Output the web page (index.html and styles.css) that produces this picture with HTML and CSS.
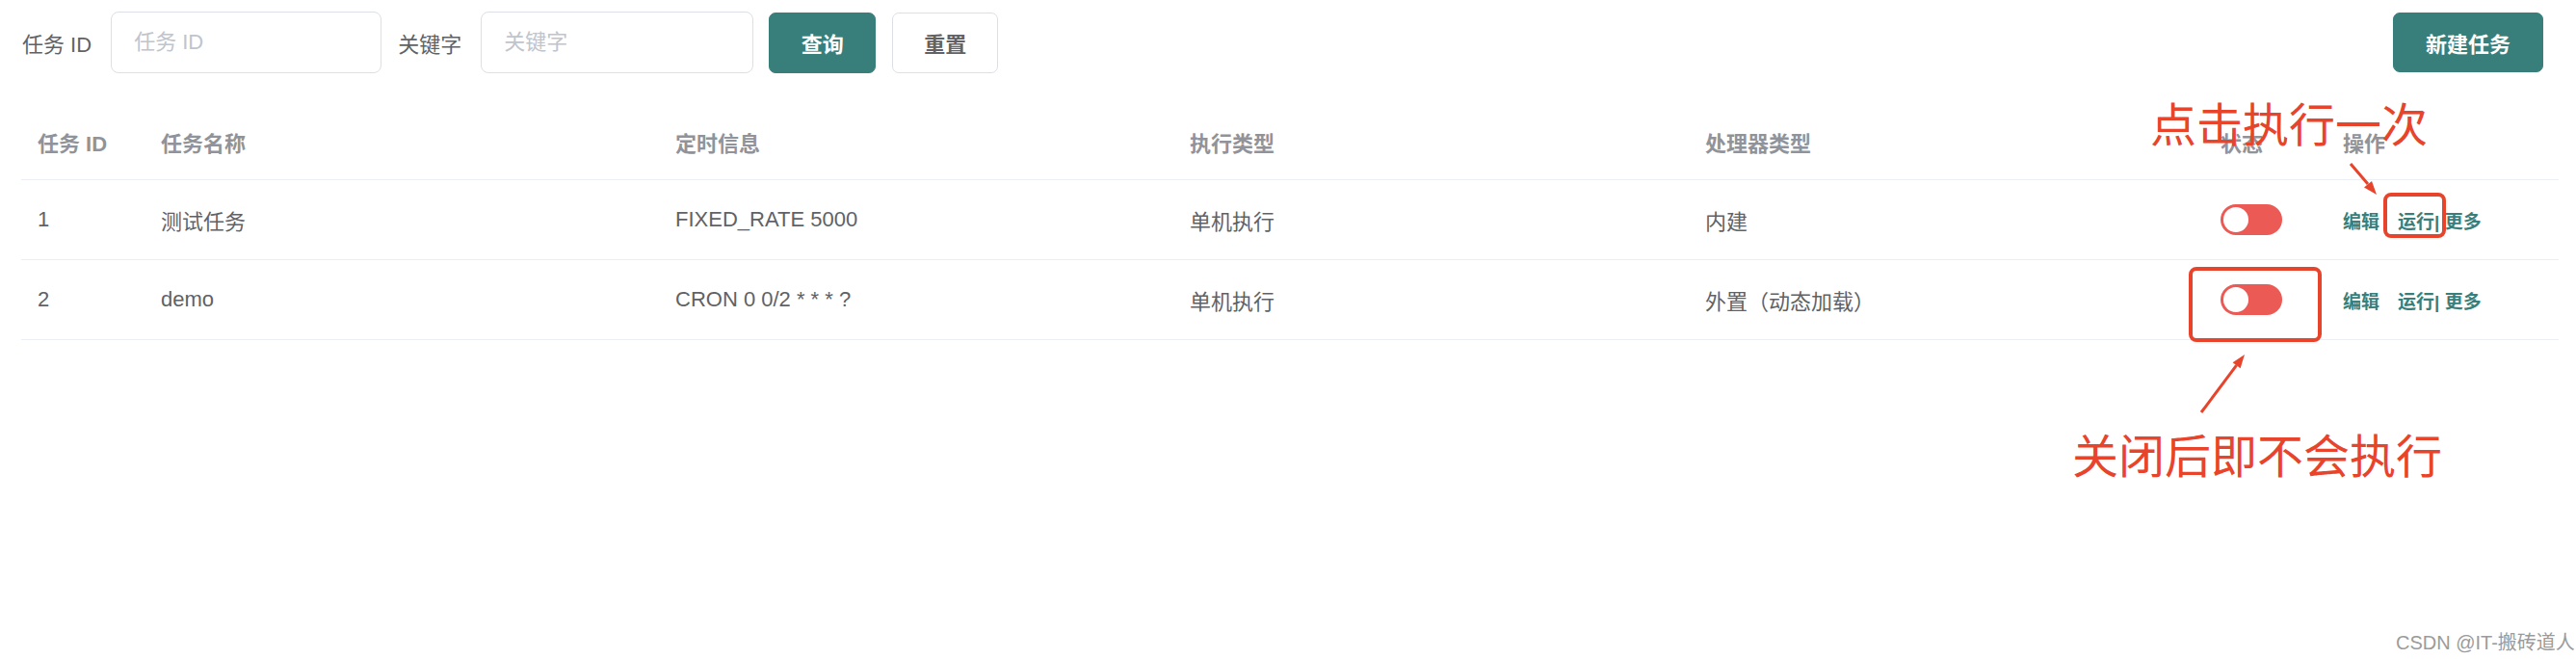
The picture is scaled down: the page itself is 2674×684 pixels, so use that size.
FILE: index.html
```html
<!DOCTYPE html>
<html lang="zh-CN">
<head>
    <meta charset="UTF-8">
    <title>任务管理</title>
    <link rel="stylesheet" href="styles.css">
</head>
<body>
    <div class="page">
        <div class="toolbar">
            <label class="field-label" for="taskId">任务 ID</label>
            <input class="field" type="text" id="taskId" placeholder="任务 ID">
            <label class="field-label" for="keyword">关键字</label>
            <input class="field" type="text" id="keyword" placeholder="关键字">
            <button class="btn btn-primary" type="button">查询</button>
            <button class="btn btn-plain" type="button">重置</button>
            <button class="btn btn-primary btn-new" type="button">新建任务</button>
        </div>

        <table class="task-table">
            <colgroup>
                <col class="c-id">
                <col class="c-name">
                <col class="c-timer">
                <col class="c-exec">
                <col class="c-handler">
                <col class="c-status">
                <col class="c-ops">
            </colgroup>
            <thead>
                <tr>
                    <th>任务 ID</th>
                    <th>任务名称</th>
                    <th>定时信息</th>
                    <th>执行类型</th>
                    <th>处理器类型</th>
                    <th>状态</th>
                    <th>操作</th>
                </tr>
            </thead>
            <tbody>
                <tr>
                    <td>1</td>
                    <td>测试任务</td>
                    <td>FIXED_RATE 5000</td>
                    <td>单机执行</td>
                    <td>内建</td>
                    <td><span class="switch"><span class="knob"></span></span></td>
                    <td class="ops"><a href="#">编辑</a><a href="#" class="run">运行| </a><a href="#">更多</a></td>
                </tr>
                <tr>
                    <td>2</td>
                    <td>demo</td>
                    <td>CRON 0 0/2 * * * ?</td>
                    <td>单机执行</td>
                    <td>外置（动态加载）</td>
                    <td><span class="switch"><span class="knob"></span></span></td>
                    <td class="ops"><a href="#">编辑</a><a href="#" class="run">运行| </a><a href="#">更多</a></td>
                </tr>
            </tbody>
        </table>
    </div>

    <!-- annotations drawn over the screenshot -->
    <div class="note note-run">点击执行一次</div>
    <div class="note note-off">关闭后即不会执行</div>
    <div class="mark mark-run"></div>
    <div class="mark mark-switch"></div>
    <svg class="arrows" width="2674" height="684" viewBox="0 0 2674 684">
        <line x1="2440" y1="170" x2="2458" y2="191" stroke="#e8432b" stroke-width="3"/>
        <polygon points="2467,202 2454,194.5 2462,188" fill="#e8432b"/>
        <line x1="2285" y1="428" x2="2321.6" y2="379.2" stroke="#e8432b" stroke-width="3"/>
        <polygon points="2330,368 2325.6,382.2 2317.6,376.2" fill="#e8432b"/>
    </svg>
    <div class="watermark">CSDN @IT-搬砖道人</div>
</body>
</html>
```

FILE: styles.css
```css
body {
    margin: 0;
    background: #fff;
    font-family: "Liberation Sans", "Noto Sans CJK SC", sans-serif;
    font-size: 22px;
    color: #606266;
    width: 2674px;
    height: 684px;
    position: relative;
    overflow: hidden;
}
.page {
    padding: 12px 18px 0 22px;
}
.toolbar {
    display: flex;
    align-items: center;
    height: 64px;
    padding-right: 16px;
}
.field-label {
    margin: 0 20px 0 1px;
    color: #606266;
    white-space: nowrap;
}
.field {
    box-sizing: border-box;
    width: 281px;
    height: 64px;
    border: 1px solid #dcdfe6;
    border-radius: 8px;
    padding: 0 23px;
    margin-right: 16px;
    font-family: inherit;
    font-size: 22px;
    color: #606266;
    outline: none;
}
.field:last-of-type {
    width: 283px;
    margin-right: 16px;
}
.field::placeholder {
    color: #c0c4cc;
}
.btn {
    box-sizing: border-box;
    height: 63px;
    width: 111px;
    border-radius: 7px;
    font-family: inherit;
    font-size: 22px;
    font-weight: bold;
    cursor: pointer;
}
.btn-primary {
    background: #387f7b;
    border: 1px solid #387f7b;
    color: #fff;
}
.btn-plain {
    background: #fff;
    border: 1px solid #dcdfe6;
    color: #606266;
    margin-left: 17px;
    width: 110px;
}
.btn-new {
    margin-left: auto;
    width: 156px;
    height: 62px;
}

.task-table {
    width: 2634px;
    margin-top: 30px;
    border-collapse: collapse;
    table-layout: fixed;
}
.c-id { width: 128px; }
.c-name { width: 534px; }
.c-timer { width: 534px; }
.c-exec { width: 535px; }
.c-handler { width: 535px; }
.c-status { width: 127px; }
.c-ops { width: 241px; }
.task-table th,
.task-table td {
    text-align: left;
    padding: 0 17px;
    border-bottom: 1px solid #ebeef5;
    white-space: nowrap;
}
.task-table th {
    height: 79px;
    padding-top: 1px;
    color: #909399;
    font-weight: bold;
}
.task-table td {
    height: 82px;
}
.switch {
    display: inline-block;
    vertical-align: middle;
    width: 64px;
    height: 32px;
    border-radius: 16px;
    background: #eb5a55;
    position: relative;
}
.switch .knob {
    position: absolute;
    left: 3px;
    top: 3px;
    width: 26px;
    height: 26px;
    border-radius: 50%;
    background: #fff;
}
.ops {
    font-size: 19px;
    font-weight: 600;
}
.ops a {
    color: #387f7b;
    text-decoration: none;
    margin-right: 19px;
}
.ops a.run {
    margin-right: 0;
    white-space: pre;
}

.note {
    position: absolute;
    color: #e8432b;
    font-family: "Noto Sans CJK SC", sans-serif;
    font-size: 48px;
    line-height: 48px;
    white-space: nowrap;
}
.note-run {
    left: 2232px;
    top: 102px;
}
.note-off {
    left: 2151px;
    top: 446px;
}
.mark {
    position: absolute;
    box-sizing: border-box;
    border: 4px solid #e8432b;
    border-radius: 8px;
}
.mark-run {
    left: 2474px;
    top: 200px;
    width: 65px;
    height: 47px;
}
.mark-switch {
    left: 2272px;
    top: 277px;
    width: 138px;
    height: 78px;
}
.arrows {
    position: absolute;
    left: 0;
    top: 0;
    pointer-events: none;
}
.watermark {
    position: absolute;
    left: 2487px;
    top: 651px;
    font-size: 20px;
    color: #9b9b9b;
    white-space: nowrap;
}
```
